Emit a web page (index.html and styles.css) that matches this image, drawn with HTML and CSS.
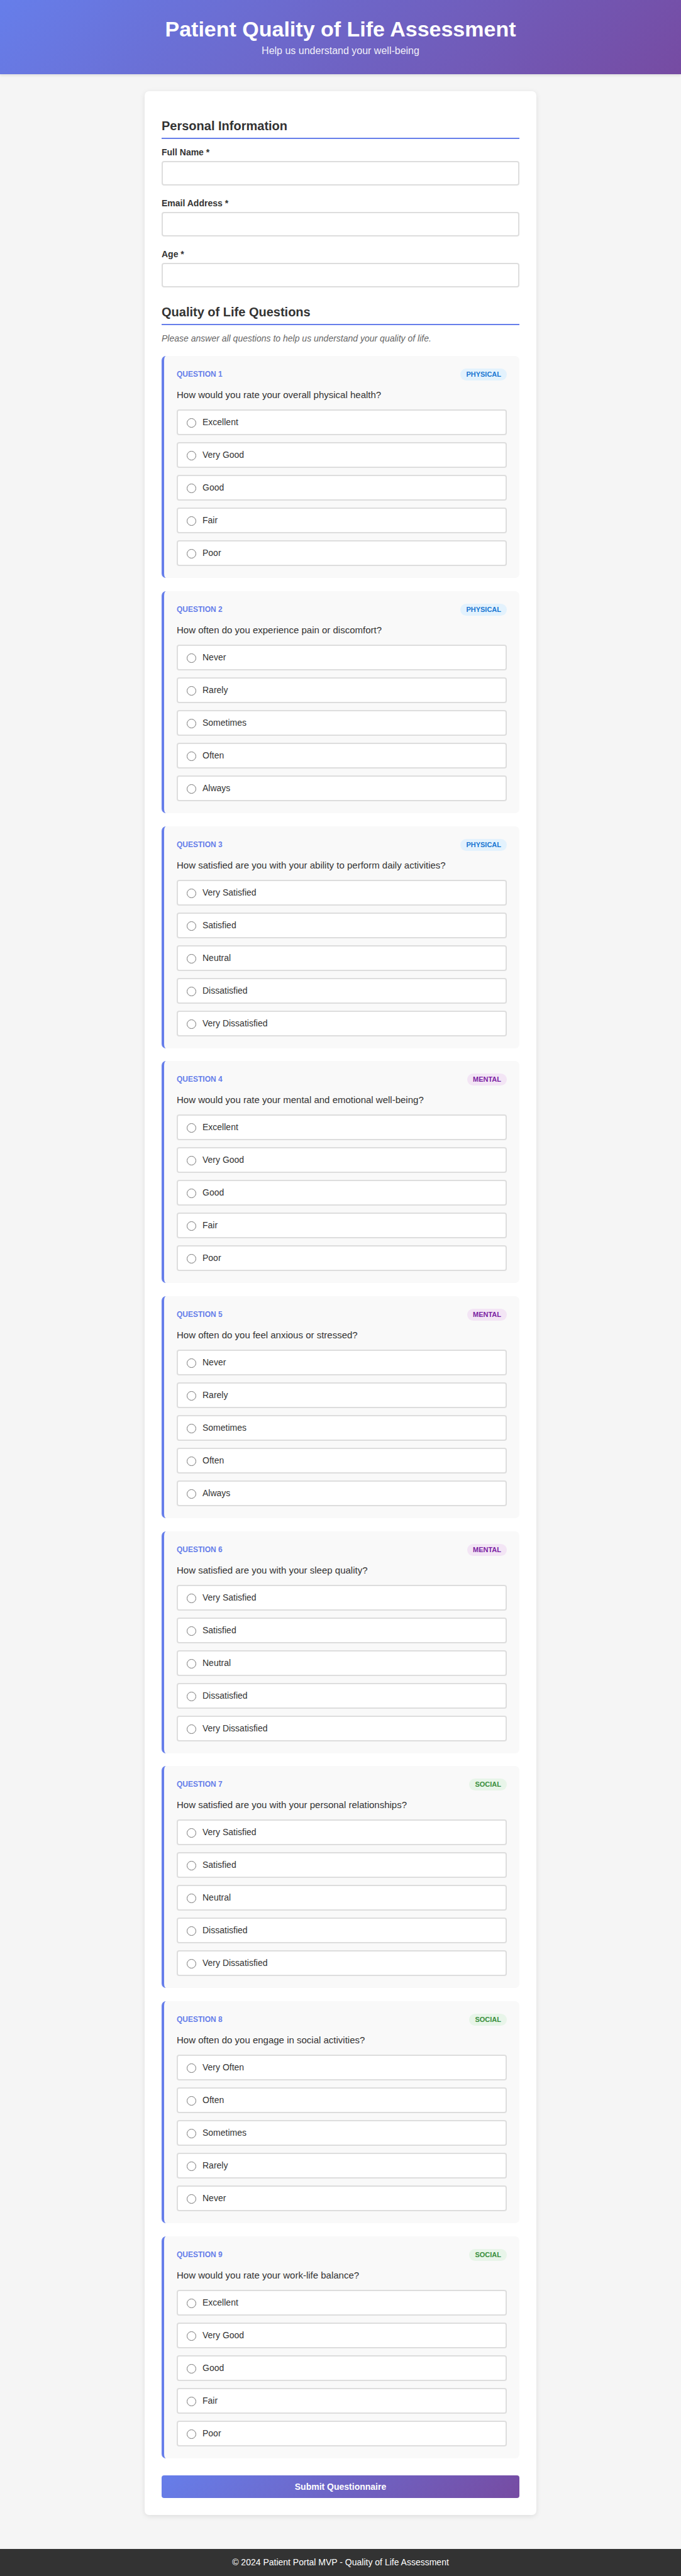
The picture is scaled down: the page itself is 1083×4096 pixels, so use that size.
FILE: index.html
```html
<!DOCTYPE html>
<html lang="en">
<head>
<meta charset="UTF-8">
<meta name="viewport" content="width=device-width, initial-scale=1">
<title>Patient Quality of Life Assessment</title>
<link rel="stylesheet" href="styles.css">
</head>
<body>
<header class="site-header">
  <h1>Patient Quality of Life Assessment</h1>
  <p>Help us understand your well-being</p>
</header>

<main class="container">
  <form class="form-card">
    <section class="form-section">
      <h2>Personal Information</h2>
      <div class="fields">
        <div class="field">
          <label for="name">Full Name *</label>
          <input type="text" id="name" name="name">
        </div>
        <div class="field">
          <label for="email">Email Address *</label>
          <input type="email" id="email" name="email">
        </div>
        <div class="field">
          <label for="age">Age *</label>
          <input type="number" id="age" name="age">
        </div>
      </div>
    </section>

    <section class="form-section">
      <h2>Quality of Life Questions</h2>
      <p class="intro">Please answer all questions to help us understand your quality of life.</p>

      <div class="question-groups">
        <div class="question-group">
          <div class="question" role="radiogroup" aria-labelledby="q1">
            <div class="question-header"><span class="question-number">QUESTION 1</span><span class="badge physical">PHYSICAL</span></div>
            <p class="question-text" id="q1">How would you rate your overall physical health?</p>
            <div class="options">
              <label class="option"><input type="radio" name="q1">Excellent</label>
              <label class="option"><input type="radio" name="q1">Very Good</label>
              <label class="option"><input type="radio" name="q1">Good</label>
              <label class="option"><input type="radio" name="q1">Fair</label>
              <label class="option"><input type="radio" name="q1">Poor</label>
            </div>
          </div>
          <div class="question" role="radiogroup" aria-labelledby="q2">
            <div class="question-header"><span class="question-number">QUESTION 2</span><span class="badge physical">PHYSICAL</span></div>
            <p class="question-text" id="q2">How often do you experience pain or discomfort?</p>
            <div class="options">
              <label class="option"><input type="radio" name="q2">Never</label>
              <label class="option"><input type="radio" name="q2">Rarely</label>
              <label class="option"><input type="radio" name="q2">Sometimes</label>
              <label class="option"><input type="radio" name="q2">Often</label>
              <label class="option"><input type="radio" name="q2">Always</label>
            </div>
          </div>
          <div class="question" role="radiogroup" aria-labelledby="q3">
            <div class="question-header"><span class="question-number">QUESTION 3</span><span class="badge physical">PHYSICAL</span></div>
            <p class="question-text" id="q3">How satisfied are you with your ability to perform daily activities?</p>
            <div class="options">
              <label class="option"><input type="radio" name="q3">Very Satisfied</label>
              <label class="option"><input type="radio" name="q3">Satisfied</label>
              <label class="option"><input type="radio" name="q3">Neutral</label>
              <label class="option"><input type="radio" name="q3">Dissatisfied</label>
              <label class="option"><input type="radio" name="q3">Very Dissatisfied</label>
            </div>
          </div>
        </div>

        <div class="question-group">
          <div class="question" role="radiogroup" aria-labelledby="q4">
            <div class="question-header"><span class="question-number">QUESTION 4</span><span class="badge mental">MENTAL</span></div>
            <p class="question-text" id="q4">How would you rate your mental and emotional well-being?</p>
            <div class="options">
              <label class="option"><input type="radio" name="q4">Excellent</label>
              <label class="option"><input type="radio" name="q4">Very Good</label>
              <label class="option"><input type="radio" name="q4">Good</label>
              <label class="option"><input type="radio" name="q4">Fair</label>
              <label class="option"><input type="radio" name="q4">Poor</label>
            </div>
          </div>
          <div class="question" role="radiogroup" aria-labelledby="q5">
            <div class="question-header"><span class="question-number">QUESTION 5</span><span class="badge mental">MENTAL</span></div>
            <p class="question-text" id="q5">How often do you feel anxious or stressed?</p>
            <div class="options">
              <label class="option"><input type="radio" name="q5">Never</label>
              <label class="option"><input type="radio" name="q5">Rarely</label>
              <label class="option"><input type="radio" name="q5">Sometimes</label>
              <label class="option"><input type="radio" name="q5">Often</label>
              <label class="option"><input type="radio" name="q5">Always</label>
            </div>
          </div>
          <div class="question" role="radiogroup" aria-labelledby="q6">
            <div class="question-header"><span class="question-number">QUESTION 6</span><span class="badge mental">MENTAL</span></div>
            <p class="question-text" id="q6">How satisfied are you with your sleep quality?</p>
            <div class="options">
              <label class="option"><input type="radio" name="q6">Very Satisfied</label>
              <label class="option"><input type="radio" name="q6">Satisfied</label>
              <label class="option"><input type="radio" name="q6">Neutral</label>
              <label class="option"><input type="radio" name="q6">Dissatisfied</label>
              <label class="option"><input type="radio" name="q6">Very Dissatisfied</label>
            </div>
          </div>
        </div>

        <div class="question-group">
          <div class="question" role="radiogroup" aria-labelledby="q7">
            <div class="question-header"><span class="question-number">QUESTION 7</span><span class="badge social">SOCIAL</span></div>
            <p class="question-text" id="q7">How satisfied are you with your personal relationships?</p>
            <div class="options">
              <label class="option"><input type="radio" name="q7">Very Satisfied</label>
              <label class="option"><input type="radio" name="q7">Satisfied</label>
              <label class="option"><input type="radio" name="q7">Neutral</label>
              <label class="option"><input type="radio" name="q7">Dissatisfied</label>
              <label class="option"><input type="radio" name="q7">Very Dissatisfied</label>
            </div>
          </div>
          <div class="question" role="radiogroup" aria-labelledby="q8">
            <div class="question-header"><span class="question-number">QUESTION 8</span><span class="badge social">SOCIAL</span></div>
            <p class="question-text" id="q8">How often do you engage in social activities?</p>
            <div class="options">
              <label class="option"><input type="radio" name="q8">Very Often</label>
              <label class="option"><input type="radio" name="q8">Often</label>
              <label class="option"><input type="radio" name="q8">Sometimes</label>
              <label class="option"><input type="radio" name="q8">Rarely</label>
              <label class="option"><input type="radio" name="q8">Never</label>
            </div>
          </div>
          <div class="question" role="radiogroup" aria-labelledby="q9">
            <div class="question-header"><span class="question-number">QUESTION 9</span><span class="badge social">SOCIAL</span></div>
            <p class="question-text" id="q9">How would you rate your work-life balance?</p>
            <div class="options">
              <label class="option"><input type="radio" name="q9">Excellent</label>
              <label class="option"><input type="radio" name="q9">Very Good</label>
              <label class="option"><input type="radio" name="q9">Good</label>
              <label class="option"><input type="radio" name="q9">Fair</label>
              <label class="option"><input type="radio" name="q9">Poor</label>
            </div>
          </div>
        </div>
      </div>
    </section>

    <button type="submit" class="submit">Submit Questionnaire</button>
  </form>
</main>

<footer class="site-footer">
  <p>© 2024 Patient Portal MVP - Quality of Life Assessment</p>
</footer>
</body>
</html>
```

FILE: styles.css
```css
* {
  box-sizing: border-box;
  margin: 0;
  padding: 0;
}

body {
  background: #f5f5f5;
  color: #333;
  font-family: "Liberation Sans", Arial, sans-serif;
  font-size: 14px;
  line-height: 21px;
}

.site-header {
  padding: 27px 27px 25px;
  background: linear-gradient(135deg, #667eea 0%, #764ba2 100%);
  box-shadow: 0 2px 4px rgba(0, 0, 0, 0.1);
  color: #fff;
  text-align: center;
}

.site-header h1 {
  margin-bottom: 4px;
  font-size: 34px;
  line-height: 38px;
}

.site-header p {
  font-size: 16px;
  line-height: 24px;
  opacity: 0.9;
}

.container {
  max-width: 677px;
  margin: 0 auto;
  padding: 27px 27px 54px;
}

.form-card {
  padding: 43px 27px 27px;
  border-radius: 7px;
  background: #fff;
  box-shadow: 0 2px 8px rgba(0, 0, 0, 0.1);
}

.form-section + .form-section {
  margin-top: 27px;
}

h2 {
  margin-bottom: 11px;
  padding-bottom: 7px;
  border-bottom: 2px solid #667eea;
  font-size: 20px;
  line-height: 24px;
}

.fields {
  display: flex;
  flex-direction: column;
  gap: 18px;
}

.field label {
  display: block;
  margin-bottom: 3px;
  font-weight: bold;
}

.field input {
  display: block;
  width: 100%;
  height: 39px;
  padding: 0 10px;
  border: 2px solid #ddd;
  border-radius: 4px;
  background: #fff;
  font: inherit;
}

.intro {
  margin-bottom: 17px;
  color: #666;
  font-style: italic;
}

.question-groups {
  display: flex;
  flex-direction: column;
  gap: 20px;
}

.question-group {
  display: flex;
  flex-direction: column;
  gap: 21px;
}

.question {
  padding: 20px 20px 19px;
  border-left: 4px solid #667eea;
  border-radius: 7px;
  background: #f9f9f9;
}

.question-header {
  display: flex;
  justify-content: space-between;
  align-items: center;
  margin-bottom: 11px;
}

.question-number {
  color: #667eea;
  font-size: 12px;
  font-weight: bold;
  line-height: 19px;
}

.badge {
  padding: 0 9px;
  border-radius: 10px;
  font-size: 11px;
  font-weight: bold;
  line-height: 19px;
}

.physical {
  background: #e3f2fd;
  color: #1976d2;
}

.mental {
  background: #f3e5f5;
  color: #7b1fa2;
}

.social {
  background: #e8f5e9;
  color: #388e3c;
}

.question-text {
  margin-bottom: 11px;
  font-size: 15px;
  line-height: 24px;
}

.options {
  display: flex;
  flex-direction: column;
  gap: 11px;
}

.option {
  padding: 9px 14px;
  border: 2px solid #ddd;
  border-radius: 4px;
  background: #fff;
  line-height: 19px;
  cursor: pointer;
}

.option input {
  width: 15px;
  height: 15px;
  margin-right: 10px;
  vertical-align: middle;
}

.submit {
  display: block;
  width: 100%;
  height: 36px;
  margin-top: 27px;
  border: 0;
  border-radius: 4px;
  background: linear-gradient(135deg, #667eea 0%, #764ba2 100%);
  color: #fff;
  font: bold 14px "Liberation Sans", Arial, sans-serif;
  cursor: pointer;
}

.site-footer {
  padding: 11px 27px;
  background: #333;
  color: #fff;
  text-align: center;
}
```
